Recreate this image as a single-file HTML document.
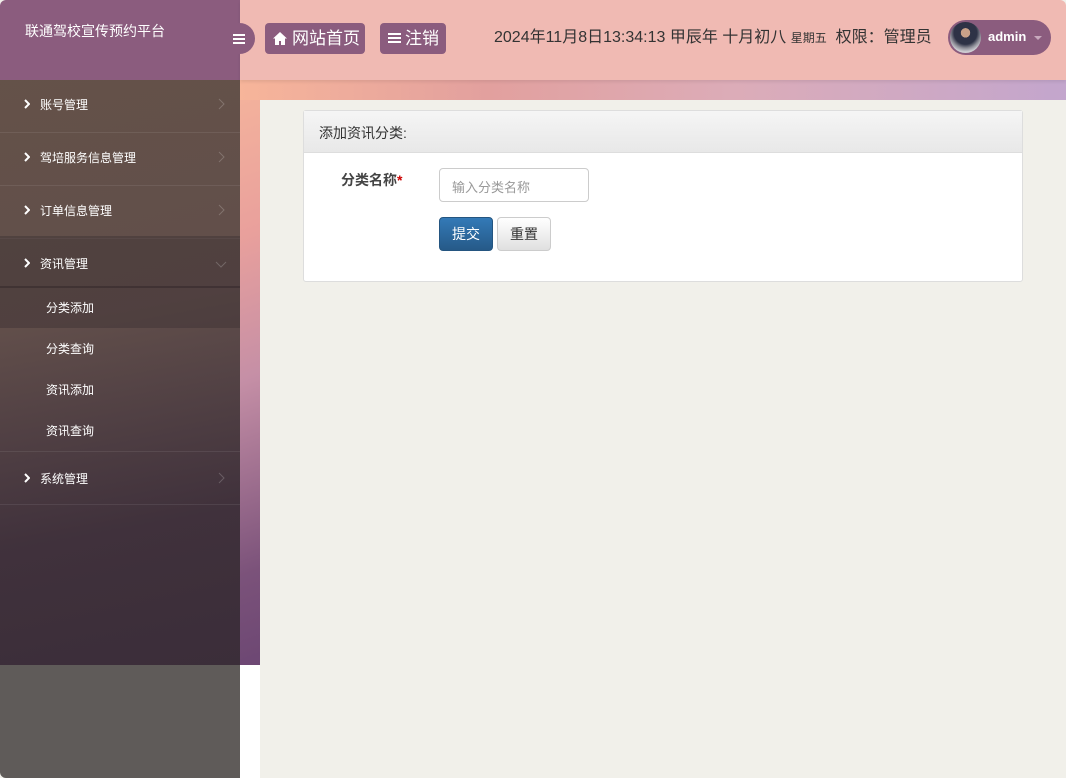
<!DOCTYPE html>
<html><head><meta charset="utf-8"><style>
*{margin:0;padding:0;box-sizing:border-box}
body{width:1066px;height:778px;overflow:hidden;font-family:"Liberation Sans","Noto Sans CJK SC",sans-serif;background:#f1f0ea;position:relative}
.bg{position:absolute;left:0;top:80px;width:1066px;height:585px;background:linear-gradient(160deg,#fbbf9c 0%,#e9a09c 25%,#c58fa6 40%,#7b527a 60%,#5e3c6c 80%);}
.bgtop{position:absolute;left:240px;top:80px;width:826px;height:20px;background:linear-gradient(90deg,#f7b59a 0%,#e2a09e 30%,#dcacb8 60%,#c3a6cd 100%)}
.main{position:absolute;left:260px;top:100px;width:806px;height:678px;background:#f1f0ea}
.hdl{position:absolute;left:0;top:0;width:240px;height:80px;background:#8b5c7e;border-top-left-radius:6px}
.hdl span{position:absolute;left:25px;top:21px;color:#fff;font-size:14px}
.hdr{position:absolute;left:240px;top:0;width:826px;height:80px;background:#f0bab3;border-top-right-radius:6px;box-shadow:0 2px 3px rgba(0,0,0,.08)}
.tog{position:absolute;left:222px;top:23px;width:33px;height:31px;border-radius:0 16px 16px 0;background:#8b5c7e}
.bars{position:absolute;width:12px;height:10px;border-top:2px solid #fff;border-bottom:2px solid #fff}
.bars:after{content:"";position:absolute;left:0;top:2px;width:100%;height:2px;background:#fff}
.btn{position:absolute;top:23px;height:31px;background:#8b5c7e;color:#fff;border-radius:4px;font-size:17px;line-height:31px}
.btn span{position:absolute;top:0}
.dt{position:absolute;left:494px;top:28px;font-size:16px;color:#333;white-space:nowrap;line-height:20px}
.dt small{font-size:12px}
.av{position:absolute;left:948px;top:20px;width:103px;height:35px;border-radius:18px;background:#8b5c7e}
.av .ph{position:absolute;left:2px;top:2px;width:31px;height:31px;border-radius:50%;background:radial-gradient(circle at 50% 35%,#c9a189 0 18%,#2e3246 19% 45%,#8c8c96 60%,#cfcfd4 75%)}
.av b{position:absolute;left:40px;top:9px;color:#fff;font-size:13px}
.av i{position:absolute;left:86px;top:16px;border:4px solid transparent;border-top-color:#c8a9bd}
.side{position:absolute;left:0;top:80px;width:240px;height:585px;background:linear-gradient(170deg,rgba(95,78,70,.97) 0%,rgba(90,74,70,.95) 40%,rgba(62,48,58,.98) 75%,rgba(58,45,56,.98) 100%)}
.it{position:absolute;left:0;width:240px;height:53px;border-bottom:1px solid rgba(255,255,255,.08);color:#fff;font-size:12px}
.it span{position:absolute;left:40px;top:16px}
.it svg{position:absolute}
.sub{position:absolute;left:46px;color:#fff;font-size:12px}
.foot{position:absolute;left:0;top:665px;width:240px;height:113px;background:#5f5b59;border-bottom-left-radius:6px}
.wh{position:absolute;left:240px;top:665px;width:20px;height:113px;background:#fff}
.card{position:absolute;left:303px;top:110px;width:720px;height:172px;background:#fff;border:1px solid #ddd;border-radius:3px}
.ch{height:42px;background:linear-gradient(#f5f5f5,#e8e8e8);border-bottom:1px solid #ddd;font-size:14px;color:#333;padding:12px 0 0 15px}
.lbl{position:absolute;left:37px;top:59px;font-size:14px;font-weight:bold;color:#444}
.lbl i{color:#c00;font-style:normal}
.inp{position:absolute;left:135px;top:57px;width:150px;height:34px;border:1px solid #ccc;border-radius:4px;font-size:13px;color:#999;padding:8px 0 0 12px}
.b1{position:absolute;left:135px;top:106px;width:54px;height:34px;border-radius:4px;background:linear-gradient(#337ab7,#265a88);border:1px solid #245580;color:#fff;font-size:14px;text-align:center;line-height:32px}
.b2{position:absolute;left:193px;top:106px;width:54px;height:34px;border-radius:4px;background:linear-gradient(#fff,#e0e0e0);border:1px solid #ccc;color:#333;font-size:14px;text-align:center;line-height:32px}
</style></head><body>
<div class="bg"></div><div class="bgtop"></div>
<div class="main"></div>
<div class="hdl"><span>联通驾校宣传预约平台</span></div>
<div class="hdr"></div>
<div class="tog"><div class="bars" style="left:11px;top:11px"></div></div>
<div class="btn" style="left:265px;width:100px"><svg style="position:absolute;left:8px;top:9px" width="14" height="13" viewBox="0 0 14 13"><path d="M7 0L0 6.5h2V13h4V9h2v4h4V6.5h2z" fill="#fff"/></svg><span style="left:27px">网站首页</span></div>
<div class="btn" style="left:380px;width:66px"><div class="bars" style="left:8px;top:10px;width:13px"></div><span style="left:25px">注销</span></div>
<div class="dt">2024年11月8日13:34:13 甲辰年 十月初八 <small>星期五</small>&nbsp; 权限：管理员</div>
<div class="av"><div class="ph"></div><b>admin</b><i></i></div>
<div class="side">
<div class="it" style="top:0"><svg style="left:24px;top:19px" width="6" height="10"><path d="M1 1l4 4-4 4" stroke="#fff" stroke-width="2" fill="none"/></svg><span>账号管理</span><svg style="left:218px;top:18px" width="7" height="12"><path d="M1 1l5 5-5 5" stroke="rgba(255,255,255,.2)" fill="none"/></svg></div>
<div class="it" style="top:53px"><svg style="left:24px;top:19px" width="6" height="10"><path d="M1 1l4 4-4 4" stroke="#fff" stroke-width="2" fill="none"/></svg><span>驾培服务信息管理</span><svg style="left:218px;top:18px" width="7" height="12"><path d="M1 1l5 5-5 5" stroke="rgba(255,255,255,.2)" fill="none"/></svg></div>
<div class="it" style="top:106px"><svg style="left:24px;top:19px" width="6" height="10"><path d="M1 1l4 4-4 4" stroke="#fff" stroke-width="2" fill="none"/></svg><span>订单信息管理</span><svg style="left:218px;top:18px" width="7" height="12"><path d="M1 1l5 5-5 5" stroke="rgba(255,255,255,.2)" fill="none"/></svg></div>
<div class="it" style="top:156px;height:52px;background:rgba(60,48,52,.45);border-bottom:2px solid rgba(40,30,35,.4)"><svg style="left:24px;top:22px" width="6" height="10"><path d="M1 1l4 4-4 4" stroke="#fff" stroke-width="2" fill="none"/></svg><span style="top:19px">资讯管理</span><svg style="left:215px;top:25px" width="12" height="7"><path d="M1 1l5 5 5-5" stroke="rgba(255,255,255,.2)" fill="none"/></svg></div>
<div style="position:absolute;left:0;top:208px;width:240px;height:40px;background:rgba(60,48,52,.45)"></div>
<div class="sub" style="top:219px">分类添加</div>
<div class="sub" style="top:260px">分类查询</div>
<div class="sub" style="top:301px">资讯添加</div>
<div class="sub" style="top:342px">资讯查询</div>
<div style="position:absolute;left:0;top:371px;width:240px;border-top:1px solid rgba(255,255,255,.08)"></div>
<div class="it" style="top:372px"><svg style="left:24px;top:21px" width="6" height="10"><path d="M1 1l4 4-4 4" stroke="#fff" stroke-width="2" fill="none"/></svg><span style="top:18px">系统管理</span><svg style="left:218px;top:20px" width="7" height="12"><path d="M1 1l5 5-5 5" stroke="rgba(255,255,255,.2)" fill="none"/></svg></div>
</div>
<div class="foot"></div><div class="wh"></div>
<div class="card"><div class="ch">添加资讯分类:</div>
<div class="lbl">分类名称<i>*</i></div>
<div class="inp">输入分类名称</div>
<div class="b1">提交</div><div class="b2">重置</div></div>
</body></html>
